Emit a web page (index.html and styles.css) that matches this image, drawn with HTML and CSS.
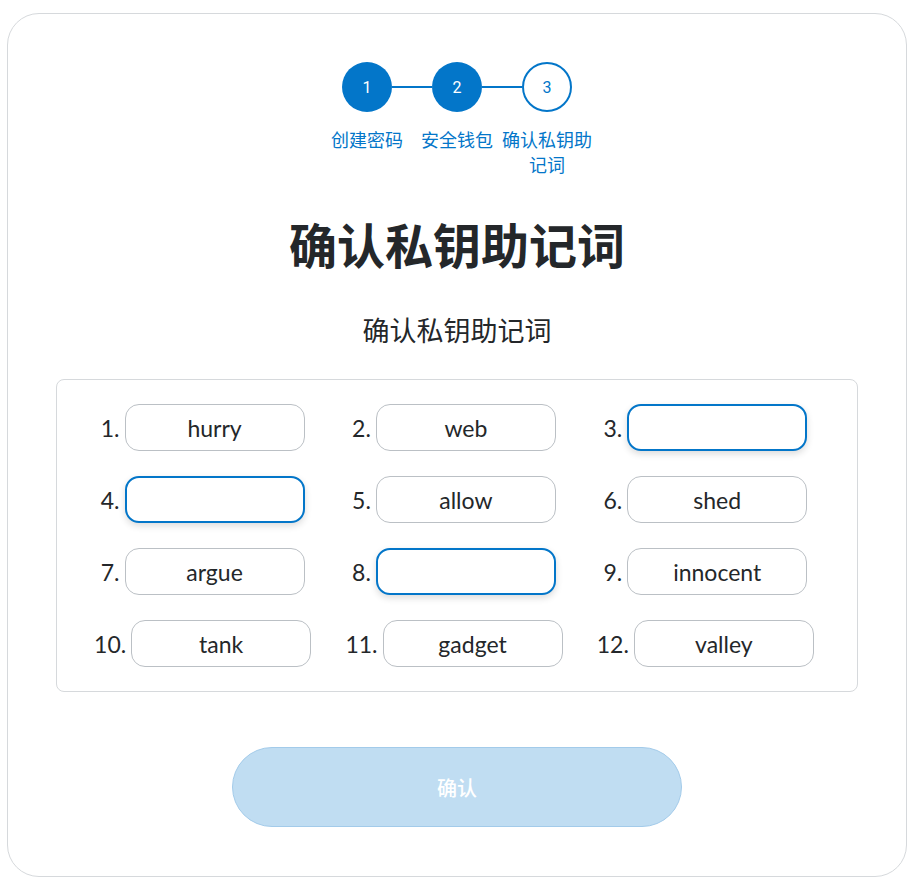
FILE: index.html
```html
<!DOCTYPE html>
<html lang="zh">
<head>
<meta charset="utf-8">
<title>确认私钥助记词</title>
<link rel="stylesheet" href="styles.css">
</head>
<body>
<div class="card">
  <div class="stepper">
    <div class="circles">
      <div class="circle done">1</div>
      <div class="bar"></div>
      <div class="circle done">2</div>
      <div class="bar"></div>
      <div class="circle current">3</div>
    </div>
    <div class="labels">
      <div class="label">创建密码</div>
      <div class="label">安全钱包</div>
      <div class="label">确认私钥助记词</div>
    </div>
  </div>
  <h1 class="title">确认私钥助记词</h1>
  <h2 class="subtitle">确认私钥助记词</h2>
  <div class="words">
    <div class="cell"><span class="num">1.</span><div class="word">hurry</div></div>
    <div class="cell"><span class="num">2.</span><div class="word">web</div></div>
    <div class="cell"><span class="num">3.</span><div class="word empty"></div></div>
    <div class="cell"><span class="num">4.</span><div class="word empty"></div></div>
    <div class="cell"><span class="num">5.</span><div class="word">allow</div></div>
    <div class="cell"><span class="num">6.</span><div class="word">shed</div></div>
    <div class="cell"><span class="num">7.</span><div class="word">argue</div></div>
    <div class="cell"><span class="num">8.</span><div class="word empty"></div></div>
    <div class="cell"><span class="num">9.</span><div class="word">innocent</div></div>
    <div class="cell"><span class="num">10.</span><div class="word">tank</div></div>
    <div class="cell"><span class="num">11.</span><div class="word">gadget</div></div>
    <div class="cell"><span class="num">12.</span><div class="word">valley</div></div>
  </div>
  <div class="actions">
    <button class="confirm" disabled>确认</button>
  </div>
</div>
</body>
</html>
```
FILE: styles.css
```css
* { box-sizing: border-box; }
html, body { margin: 0; padding: 0; background: #fff; }
body {
  font-family: "Noto Sans CJK SC", "Noto Sans", sans-serif;
  color: #24272a;
}
.card {
  width: 900px;
  height: 864px;
  margin: 13px 0 0 7px;
  border: 1px solid #d6d9dc;
  border-radius: 32px;
  padding-top: 48px;
  display: flex;
  flex-direction: column;
  align-items: center;
}
.stepper {
  display: flex;
  flex-direction: column;
  align-items: center;
}
.circles {
  display: flex;
  align-items: center;
}
.circle {
  width: 50px;
  height: 50px;
  border-radius: 50%;
  display: flex;
  align-items: center;
  justify-content: center;
  font-family: Roboto, "Noto Sans", sans-serif;
  font-size: 16px;
}
.circle.done { background: #0376c9; color: #fff; }
.circle.current { background: #fff; color: #0376c9; border: 2.5px solid #0376c9; }
.bar { width: 40px; height: 2.5px; background: #0376c9; }
.labels {
  display: flex;
  margin-top: 15px;
}
.label {
  width: 90px;
  text-align: center;
  font-size: 18px;
  line-height: 25px;
  color: #0376c9;
}
.title {
  margin: 38px 0 0;
  font-size: 48px;
  line-height: 56px;
  font-weight: 700;
  color: #24272a;
}
.subtitle {
  margin: 41px 0 0;
  font-size: 27px;
  line-height: 36px;
  font-weight: 400;
  color: #24272a;
}
.words {
  margin-top: 31px;
  width: 802px;
  border: 1px solid #d6d9dc;
  border-radius: 8px;
  padding: 24px 26px 24px 20px;
  display: grid;
  grid-template-columns: repeat(3, 1fr);
  row-gap: 25px;
}
.cell {
  display: flex;
  align-items: center;
  justify-content: center;
  gap: 5px;
}
.num {
  font-family: Lato, "Noto Sans", sans-serif;
  font-size: 23px;
  color: #24272a;
}
.word {
  width: 180px;
  height: 47px;
  border: 1px solid #bbc0c5;
  border-radius: 14px;
  display: flex;
  align-items: center;
  justify-content: center;
  font-family: Lato, "Noto Sans", sans-serif;
  font-size: 23px;
  color: #24272a;
  background: #fff;
}
.word.empty {
  border: 2.5px solid #0376c9;
  box-shadow: 0 3px 7px rgba(0, 0, 0, 0.14);
}
.actions {
  margin-top: 55px;
  display: flex;
  justify-content: center;
}
.confirm {
  width: 450px;
  height: 80px;
  border-radius: 40px;
  background: #c0ddf2;
  border: 1px solid #a3cbea;
  color: #fff;
  font-family: "Noto Sans CJK SC", sans-serif;
  font-size: 20px;
  font-weight: 500;
}
```
